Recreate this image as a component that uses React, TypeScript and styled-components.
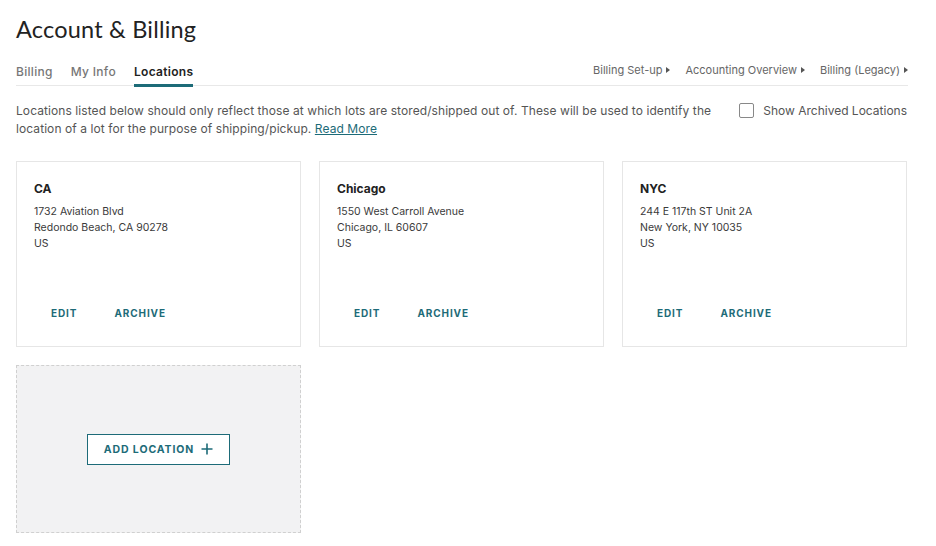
import React from "react";
import styled, { createGlobalStyle } from "styled-components";

const Global = createGlobalStyle`
  html, body { margin: 0; padding: 0; background: #fff; }
  body { font-family: Inter, "Noto Sans", sans-serif; color: #333; }
  * { box-sizing: border-box; }
`;

const TEAL = "#1d6b78";

const Page = styled.div`
  width: 936px;
  padding: 14px 28px 0 16px;
`;

const Title = styled.h1`
  margin: 0;
  font-family: Lato, "Noto Sans", sans-serif;
  font-weight: 400;
  font-size: 23.5px;
  line-height: 30px;
  color: #222;
  letter-spacing: 0.2px;
`;

const TabBar = styled.div`
  margin-top: 18px;
  display: flex;
  align-items: flex-end;
  justify-content: space-between;
  border-bottom: 1px solid #e8e8e8;
  height: 24px;
`;

const Tabs = styled.div`
  display: flex;
  gap: 18px;
  height: 100%;
`;

const Tab = styled.div<{ $active?: boolean }>`
  font-size: 12px;
  font-weight: ${(p) => (p.$active ? 600 : 500)};
  color: ${(p) => (p.$active ? "#222" : "#777")};
  letter-spacing: 0.3px;
  padding-top: 2px;
  border-bottom: 3px solid ${(p) => (p.$active ? TEAL : "transparent")};
  margin-bottom: -2px;
`;

const Links = styled.div`
  display: flex;
  gap: 15px;
  align-self: flex-start;
  padding-top: 1px;
`;

const NavLink = styled.span`
  font-size: 11px;
  color: #666;
  display: inline-flex;
  align-items: center;
  gap: 4px;
  &::after {
    content: "";
    border-left: 4px solid #555;
    border-top: 3px solid transparent;
    border-bottom: 3px solid transparent;
  }
`;

const InfoRow = styled.div`
  margin-top: 16px;
  display: flex;
  justify-content: space-between;
  align-items: flex-start;
  gap: 20px;
`;

const Info = styled.p`
  margin: 0;
  width: 712px;
  font-size: 12px;
  line-height: 18px;
  color: #555;
  letter-spacing: 0.08px;
`;

const ReadMore = styled.span`
  color: ${TEAL};
  text-decoration: underline;
`;

const CheckLabel = styled.label`
  display: flex;
  align-items: center;
  gap: 9px;
  font-size: 12px;
  color: #555;
  white-space: nowrap;
  margin-top: 1px;
  margin-right: 1px;
`;

const Box = styled.span`
  width: 15px;
  height: 15px;
  border: 1px solid #888;
  border-radius: 2px;
  background: #fff;
`;

const Grid = styled.div`
  margin-top: 23px;
  display: grid;
  grid-template-columns: repeat(3, 285px);
  column-gap: 18px;
  row-gap: 18px;
`;

const Card = styled.div`
  height: 186px;
  border: 1px solid #e6e6e6;
  background: #fff;
  padding: 20px 17px 0 17px;
  display: flex;
  flex-direction: column;
`;

const CardTitle = styled.div`
  font-size: 12px;
  font-weight: 700;
  color: #222;
  line-height: 14px;
`;

const Address = styled.div`
  margin-top: 8px;
  font-size: 10.5px;
  line-height: 16px;
  color: #3a3a3a;
`;

const Actions = styled.div`
  margin-top: auto;
  margin-bottom: 27px;
  display: flex;
  gap: 37px;
  padding-left: 17px;
`;

const Action = styled.span`
  font-size: 10px;
  font-weight: 700;
  letter-spacing: 0.9px;
  color: ${TEAL};
`;

const AddCard = styled.div`
  height: 168px;
  background: #f2f2f3;
  border: 1px dashed #d0d0d0;
  display: flex;
  align-items: center;
  justify-content: center;
`;

const AddButton = styled.button`
  width: 143px;
  height: 31px;
  background: #fff;
  border: 1px solid ${TEAL};
  color: ${TEAL};
  font-family: Inter, sans-serif;
  font-size: 10.5px;
  font-weight: 700;
  letter-spacing: 0.9px;
  display: flex;
  align-items: center;
  justify-content: center;
  gap: 7px;
`;

const locations = [
  { name: "CA", lines: ["1732 Aviation Blvd", "Redondo Beach, CA 90278", "US"] },
  { name: "Chicago", lines: ["1550 West Carroll Avenue", "Chicago, IL 60607", "US"] },
  { name: "NYC", lines: ["244 E 117th ST Unit 2A", "New York, NY 10035", "US"] },
];

export default function App() {
  return (
    <>
      <Global />
      <Page>
        <Title>Account &amp; Billing</Title>
        <TabBar>
          <Tabs>
            <Tab>Billing</Tab>
            <Tab>My Info</Tab>
            <Tab $active>Locations</Tab>
          </Tabs>
          <Links>
            <NavLink>Billing Set-up</NavLink>
            <NavLink>Accounting Overview</NavLink>
            <NavLink>Billing (Legacy)</NavLink>
          </Links>
        </TabBar>
        <InfoRow>
          <Info>
            Locations listed below should only reflect those at which lots are stored/shipped out of. These will be used to identify the location of a lot for the purpose of shipping/pickup.{" "}
            <ReadMore>Read More</ReadMore>
          </Info>
          <CheckLabel>
            <Box />
            Show Archived Locations
          </CheckLabel>
        </InfoRow>
        <Grid>
          {locations.map((l) => (
            <Card key={l.name}>
              <CardTitle>{l.name}</CardTitle>
              <Address>
                {l.lines.map((x) => (
                  <div key={x}>{x}</div>
                ))}
              </Address>
              <Actions>
                <Action>EDIT</Action>
                <Action>ARCHIVE</Action>
              </Actions>
            </Card>
          ))}
          <AddCard>
            <AddButton>
              ADD LOCATION
              <svg width="12" height="12" viewBox="0 0 12 12">
                <path d="M6 0.5v11M0.5 6h11" stroke={TEAL} strokeWidth="1.6" />
              </svg>
            </AddButton>
          </AddCard>
        </Grid>
      </Page>
    </>
  );
}
